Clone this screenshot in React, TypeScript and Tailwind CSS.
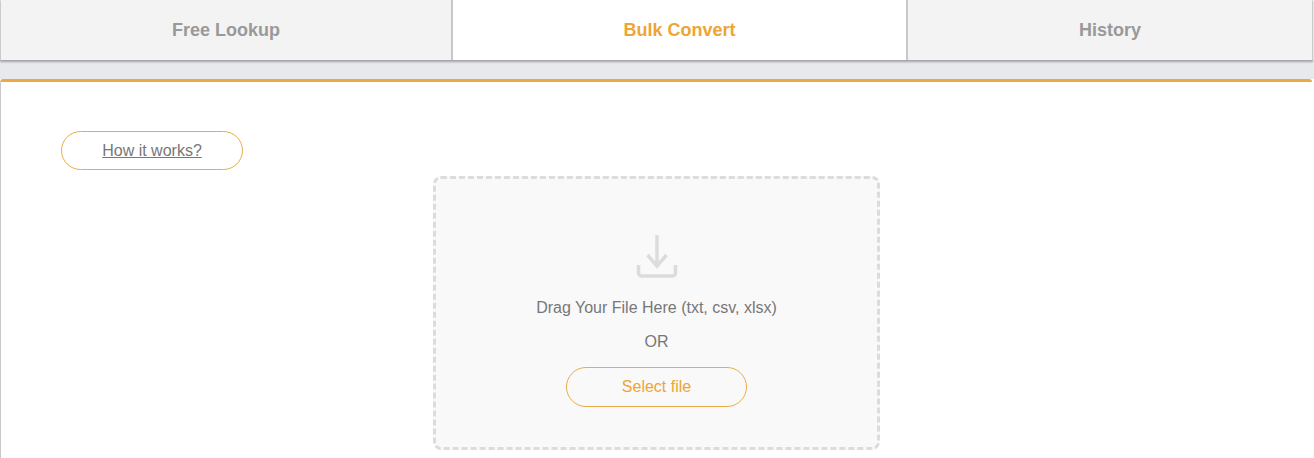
const TABS = [
  { label: 'Free Lookup', active: false, width: 'w-[450px]' },
  { label: 'Bulk Convert', active: true, width: 'w-[455px]' },
  { label: 'History', active: false, width: 'flex-1' },
];

export default function App() {
  return (
    <div className="h-[458px] overflow-hidden bg-white font-['Liberation_Sans',Arial,sans-serif]">
      <div className="h-[79px] bg-[linear-gradient(to_bottom,white_60px,#e8e9ed_60px)]">
        <nav className="ml-px mr-[2px] flex h-[60px] shadow-[0_1px_2px_1px_rgba(0,0,0,0.3)]">
          {TABS.map((tab, idx) => (
            <div
              key={tab.label}
              className={`${tab.width} ${idx > 0 ? 'border-l-2 border-l-[#c8c8ca]' : ''} ${
                tab.active ? 'bg-white text-[#eea534]' : 'bg-[#f3f3f4] text-[#999999]'
              } flex items-center justify-center text-lg font-bold`}
            >
              {tab.label}
            </div>
          ))}
        </nav>
      </div>

      <main className="mr-[2px] h-[379px] rounded-t-[3px] border-t-[3px] border-l border-[#eba93f] border-l-[#c8c8c8] bg-white">
        <div className="pt-[49px] pl-[60px]">
          <a className="flex h-[39px] w-[182px] items-center justify-center rounded-full border border-[#e8ad4a] text-base text-[#777777] underline">
            How it works?
          </a>
        </div>

        <div className="mt-[6px] ml-[432px] flex h-[274px] w-[447px] flex-col items-center rounded-lg border-[3px] border-dashed border-[#dcdcdc] bg-[#f9f9f9] pt-[55px]">
          <svg width="42" height="46" viewBox="0 0 42 46" fill="none" stroke="#dcdcdc" strokeWidth="3.500">
            <path d="M21 1v31" />
            <path d="M11.500 21L21 32l9.500-11" />
            <path d="M2.500 31v8a3 3 0 0 0 3 3h31a3 3 0 0 0 3-3v-8" />
          </svg>
          <p className="mt-[18px] text-base leading-[20px] text-[#777777]">Drag Your File Here (txt, csv, xlsx)</p>
          <p className="mt-[14px] text-base leading-[20px] text-[#777777]">OR</p>
          <button className="mt-[15px] h-[40px] w-[181px] rounded-full border border-[#e8ad4a] text-base text-[#eea534]">
            Select file
          </button>
        </div>
      </main>
    </div>
  );
}
